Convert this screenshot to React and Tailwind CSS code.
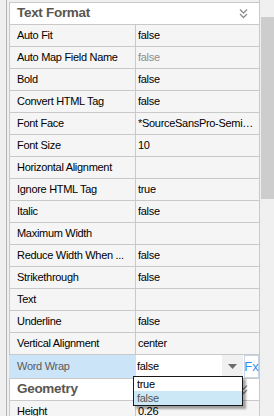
import React from "react";

const rows = [
  ["Auto Fit", "false"],
  ["Auto Map Field Name", "false", true],
  ["Bold", "false"],
  ["Convert HTML Tag", "false"],
  ["Font Face", "*SourceSansPro-Semi…"],
  ["Font Size", "10"],
  ["Horizontal Alignment", ""],
  ["Ignore HTML Tag", "true"],
  ["Italic", "false"],
  ["Maximum Width", ""],
  ["Reduce Width When ...", "false"],
  ["Strikethrough", "false"],
  ["Text", ""],
  ["Underline", "false"],
  ["Vertical Alignment", "center"],
];

function DoubleChevron() {
  return (
    <svg width="9" height="11" viewBox="0 0 9 11" fill="none" stroke="#8c8c8c" strokeWidth="1.3">
      <path d="M1 1.5 L4.5 5 L8 1.5" />
      <path d="M1 6 L4.5 9.5 L8 6" />
    </svg>
  );
}

function Section({ title }) {
  return (
    <div className="h-[23px] shrink-0 flex items-center bg-white border-t border-b border-l border-[#c9c9c9] pl-[7px] pr-[11px]">
      <span className="flex-1 text-[13.5px] font-bold text-[#5a5650]">{title}</span>
      <DoubleChevron />
    </div>
  );
}

function Row({ label, value, muted }) {
  return (
    <div className="h-[22px] shrink-0 flex border-b border-[#c9c9c9] bg-[#f5f5f5]">
      <div className="w-[127px] flex items-center border-l border-r border-[#c9c9c9] pl-[7px] truncate">{label}</div>
      <div className={`flex-1 flex items-center pl-[2px] truncate ${muted ? "text-[#8c8c8c]" : ""}`}>{value}</div>
    </div>
  );
}

export default function App() {
  return (
    <div className="w-[274px] h-[416px] bg-[#f0f0f0] flex overflow-hidden relative font-['Liberation_Sans',sans-serif] text-[11px] tracking-[-0.3px] text-black">
      <div className="w-[6px]" />
      <div className="w-px bg-[#b4b4b4]" />
      <div className="w-[2px]" />

      {/* property grid */}
      <div className="w-[251px] border-r border-[#c9c9c9] pt-[2px] flex flex-col">
        <Section title="Text Format" />
        {rows.map(([l, v, m]) => (
          <Row key={l} label={l} value={v} muted={m} />
        ))}

        {/* editing row */}
        <div className="h-[23px] shrink-0 flex">
          <div className="w-[127px] flex items-center bg-[#cce4f7] pl-[8px] text-[#5a5a5a]">Word Wrap</div>
          <div className="flex-1 flex items-stretch bg-white">
            <div className="flex-1 flex items-center pl-px">false</div>
            <div className="w-[21px] flex items-center justify-center bg-[#f0f0f0]">
              <svg width="9" height="5" viewBox="0 0 9 5">
                <path d="M0 0 H9 L4.5 5 Z" fill="#6b6b6b" />
              </svg>
            </div>
            <div className="w-px bg-white" />
            <div className="w-[15px] flex items-center justify-center border border-[#c7d6e6] text-[13px] tracking-normal text-[#3b8de6]">Fx</div>
          </div>
        </div>

        <Section title="Geometry" />
        <Row label="Height" value="0.26" />
      </div>

      <div className="w-px" />
      <div className="w-[13px] pt-[17px]">
        <div className="h-[182px] bg-[#cdcdcd]" />
      </div>

      {/* dropdown list */}
      <div className="absolute left-[133px] top-[376px] w-[110px] h-[30px] bg-white border border-[#1a1a1a] shadow-[3px_3px_2px_rgba(0,0,0,0.35)] flex flex-col">
        <div className="h-[14px] flex items-center pl-[3px]">true</div>
        <div className="h-[14px] flex items-center pl-[3px] bg-[#cce8f7] text-[#555555]">false</div>
      </div>
    </div>
  );
}
